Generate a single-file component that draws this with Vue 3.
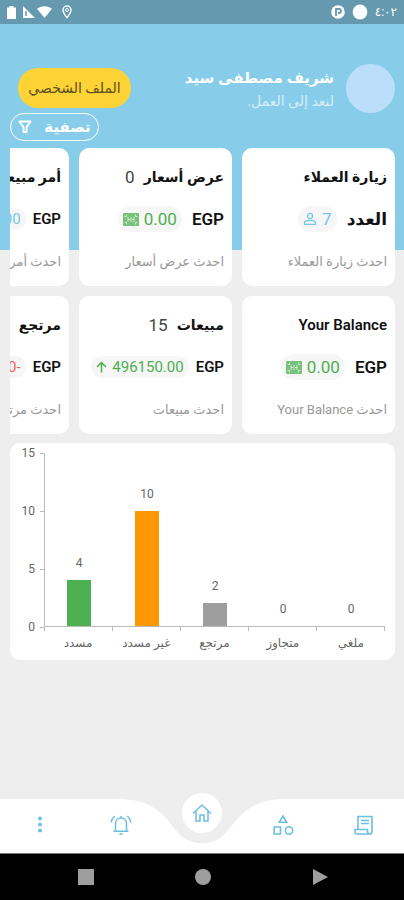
<script setup>
import { ref, computed } from 'vue'

const columns = [
  [
    { title: 'زيارة العملاء', label: 'العدد', value: '7', icon: 'person', tone: 'blue', latest: 'احدث زيارة العملاء' },
    { title: 'Your Balance', lang: 'en', label: 'EGP', value: '0.00', icon: 'money', tone: 'green', latest: 'احدث Your Balance' }
  ],
  [
    { title: 'عرض أسعار', count: '0', label: 'EGP', value: '0.00', icon: 'money', tone: 'green', latest: 'احدث عرض أسعار' },
    { title: 'مبيعات', count: '15', label: 'EGP', value: '496150.00', icon: 'up', tone: 'green', compact: true, latest: 'احدث مبيعات' }
  ],
  [
    { title: 'أمر مبيعات', count: '0', label: 'EGP', value: '0.00', icon: 'money', tone: 'blue', compact: true, latest: 'احدث أمر مبيعات' },
    { title: 'مرتجع', count: '2', label: 'EGP', value: '-100.00', icon: 'money', tone: 'red', compact: true, latest: 'احدث مرتجع' }
  ]
]

const bars = [
  { name: 'مسدد', value: 4, tone: 'green' },
  { name: 'غير مسدد', value: 10, tone: 'orange' },
  { name: 'مرتجع', value: 2, tone: 'gray' },
  { name: 'متجاوز', value: 0, tone: 'gray' },
  { name: 'ملغي', value: 0, tone: 'gray' }
]

const max = 15
const ticks = [15, 10, 5, 0]
const activeTab = ref('home')

const plotted = computed(() =>
  bars.map((bar) => ({ ...bar, height: (bar.value / max) * 100 + '%' }))
)
</script>

<template>
  <div class="app" dir="rtl" lang="ar">
    <div class="status-bar">
      <div class="status-group">
        <span class="clock">٤:٠٢</span>
        <svg width="16" height="16" viewBox="0 0 16 16"><circle cx="8" cy="8" r="7.4" fill="#fff" /></svg>
        <svg width="14" height="14" viewBox="0 0 14 14">
          <circle cx="7" cy="7" r="6.8" fill="#fff" />
          <path d="M5 11V4h3a2 2 0 0 1 0 4H7" fill="none" stroke="#6499b0" stroke-width="1.8" />
        </svg>
      </div>
      <div class="status-group icons">
        <svg class="pin" width="10" height="14" viewBox="0 0 10 14" fill="none" stroke="#fff">
          <path d="M5 12.6C2.5 9.5 1 7 1 5a4 4 0 0 1 8 0c0 2-1.500 4.500-4 7.600z" stroke-width="1.400" />
          <circle cx="5" cy="5" r="1.500" />
        </svg>
        <svg width="15" height="12" viewBox="0 0 15 12"><path d="M0 2.800C4.500-.6 10.500-.6 15 2.800L7.500 12z" fill="#fff" /></svg>
        <svg width="12" height="12" viewBox="0 0 12 12"><path d="M0 0l12 12H0z" fill="#fff" /><path d="M3 5v5" stroke="#6499b0" stroke-width="1.500" /></svg>
        <svg class="battery" width="9" height="13" viewBox="0 0 9 13"><path d="M2.500 0h4v1.500H9V13H0V1.500h2.500z" fill="#fff" /></svg>
      </div>
    </div>

    <header class="header">
      <div class="avatar"></div>
      <div class="user">
        <h1 class="user-name">شريف مصطفى سيد</h1>
        <p class="user-hint">لنعد إلى العمل.</p>
      </div>
      <button type="button" class="profile-btn">الملف الشخصي</button>
    </header>

    <div class="filter-row">
      <button type="button" class="filter-btn">
        تصفية
        <svg width="14" height="14" viewBox="0 0 14 14" fill="none" stroke="#fff" stroke-width="1.900">
          <path d="M1.500 1.500h11L8.500 7.200V12h-3V7.200z" stroke-linejoin="round" />
        </svg>
      </button>
    </div>

    <main class="content">
      <div class="cards">
        <div v-for="(column, i) in columns" :key="i" class="card-column">
          <section v-for="card in column" :key="card.title" class="card">
            <div class="card-row card-head">
              <h2 class="card-title" :lang="card.lang">{{ card.title }}</h2>
              <span v-if="card.count" class="card-count">{{ card.count }}</span>
            </div>
            <div class="card-row" :class="{ compact: card.compact }">
              <span class="card-label">{{ card.label }}</span>
              <span class="pill" :class="card.tone">
                {{ card.value }}
                <svg v-if="card.icon === 'person'" width="14" height="14" viewBox="0 0 14 14" fill="none" stroke="currentColor" stroke-width="1.300">
                  <circle cx="7" cy="4" r="2.600" />
                  <path d="M1.500 12.300v-1.500C1.500 9.200 4.500 8.400 7 8.400s5.500.8 5.500 2.400v1.500z" />
                </svg>
                <svg v-else-if="card.icon === 'up'" width="11" height="12" viewBox="0 0 11 12" fill="none" stroke="currentColor" stroke-width="1.500">
                  <path d="M5.500 11.500V1.500M1 6l4.500-4.500L10 6" />
                </svg>
                <svg v-else width="16" height="13" viewBox="0 0 16 13">
                  <rect width="16" height="13" rx="1" fill="currentColor" fill-opacity=".75" />
                  <path d="M1.500 3.500h2v-2M14.500 3.500h-2v-2M1.500 9.500h2v2M14.500 9.500h-2v2M5 4v5M11 4v5M5 6.500h2M9 6.500h2M8 4v5" fill="none" stroke="#d9efd9" stroke-width=".9" />
                </svg>
              </span>
            </div>
            <a href="#" class="card-row card-latest">{{ card.latest }}</a>
          </section>
        </div>
      </div>

      <section class="chart" dir="ltr">
        <div class="y-axis">
          <span v-for="tick in ticks" :key="tick" class="y-tick">{{ tick }}</span>
        </div>
        <div class="plot">
          <div class="bars">
            <div v-for="bar in plotted" :key="bar.name" class="slot">
              <span class="bar-value">{{ bar.value }}</span>
              <div class="bar" :class="bar.tone" :style="{ height: bar.height }"></div>
            </div>
          </div>
          <div class="x-axis">
            <span v-for="bar in plotted" :key="bar.name" class="x-tick"></span>
          </div>
          <div class="x-labels">
            <span v-for="bar in plotted" :key="bar.name" class="x-label">{{ bar.name }}</span>
          </div>
        </div>
      </section>
    </main>

    <nav class="tab-bar" dir="ltr">
      <div class="tab-shape">
        <span class="tab-side"></span>
        <svg width="168" height="54" viewBox="0 0 168 54">
          <path d="M0 0C22 0 38 6 52 24C62 37 68 44 84 44S106 37 116 24C130 6 146 0 168 0V54H0z" fill="#fff" />
        </svg>
        <span class="tab-side"></span>
      </div>
      <button type="button" class="tab" aria-label="المزيد" @click="activeTab = 'more'">
        <svg width="22" height="22" viewBox="0 0 22 22" fill="currentColor">
          <circle cx="11" cy="3.500" r="2" /><circle cx="11" cy="9.500" r="2" /><circle cx="11" cy="15.500" r="2" />
        </svg>
      </button>
      <button type="button" class="tab" aria-label="الإشعارات" @click="activeTab = 'alerts'">
        <svg width="22" height="22" viewBox="0 0 22 22" fill="none" stroke="currentColor" stroke-width="1.500">
          <path d="M3.500 16.200h15M5.500 16V8.500C5.500 5 8 3 11 3s5.500 2 5.500 5.500V16M11 3V1" />
          <path d="M1.200 7.500c.3-2.700 1.500-4.900 3.500-6.500M20.800 7.500c-.3-2.700-1.500-4.900-3.500-6.500" />
          <path d="M9 18.200h4a2 1.800 0 0 1-4 0z" fill="currentColor" stroke="none" />
        </svg>
      </button>
      <button type="button" class="tab home" aria-label="الرئيسية" @click="activeTab = 'home'">
        <span class="home-circle">
          <svg width="20" height="20" viewBox="0 0 20 20" fill="none" stroke="currentColor" stroke-width="1.500">
            <path d="M1 10.500L10 2l9 8.500M4 8v10h4v-6h4v6h4V8" />
          </svg>
        </span>
      </button>
      <button type="button" class="tab" aria-label="الأصناف" @click="activeTab = 'items'">
        <svg width="22" height="22" viewBox="0 0 22 22" fill="none" stroke="currentColor" stroke-width="1.600">
          <path d="M11 1l3.700 6.300H7.300zM2.200 12h6.300v7H2.200z" />
          <circle cx="17" cy="15.500" r="3.700" />
        </svg>
      </button>
      <button type="button" class="tab" aria-label="الفواتير" @click="activeTab = 'invoices'">
        <svg width="22" height="22" viewBox="0 0 22 22" fill="none" stroke="currentColor" stroke-width="1.600">
          <path d="M5 14.500V1.500h14v15c0 1.400-.8 2.500-2.200 2.500H4c-1.300 0-2-.8-2-2v-2.500h12.500v2c0 1.500.8 2.500 2.200 2.500" />
          <path d="M8 5.500h8M8 8.500h8" />
        </svg>
      </button>
    </nav>

    <div class="system-bar" dir="ltr">
      <svg width="16" height="16" viewBox="0 0 16 16"><rect width="16" height="16" fill="#9e9e9e" /></svg>
      <svg width="16" height="16" viewBox="0 0 16 16"><circle cx="8" cy="8" r="8" fill="#9e9e9e" /></svg>
      <svg width="16" height="16" viewBox="0 0 16 16"><path d="M1 0l15 8-15 8z" fill="#9e9e9e" /></svg>
    </div>
  </div>
</template>

<style>
body {
  background: #eee;
}
</style>

<style scoped>
.app {
  min-height: 100vh;
  display: flex;
  flex-direction: column;
  background: linear-gradient(#87cdea 250px, #eee 250px);
  font-family: Roboto, "DejaVu Sans", sans-serif;
  color: #111;
}

h1,
h2,
p {
  margin: 0;
}

button {
  font-family: inherit;
  cursor: pointer;
}

svg {
  display: block;
  flex: none;
}

.status-bar {
  height: 24px;
  display: flex;
  align-items: center;
  justify-content: space-between;
  padding: 0 7px;
  background: #6499b0;
  color: #fff;
}

.status-group {
  display: flex;
  align-items: center;
  gap: 7px;
}

.status-group.icons {
  gap: 2px;
}

.pin {
  margin-left: 8px;
}

.battery {
  margin-right: 5px;
}

.clock {
  font-size: 12px;
}

.header {
  display: flex;
  align-items: flex-start;
  padding: 40px 9px 0 18px;
}

.avatar {
  flex: none;
  width: 49px;
  height: 49px;
  border-radius: 50%;
  background: #bbdefb;
}

.user {
  flex: 1;
  padding: 2px 12px 0 0;
  color: #fff;
  white-space: nowrap;
}

.user-name {
  font-size: 15px;
  line-height: 24px;
  font-weight: 700;
}

.user-hint {
  font-size: 14px;
  line-height: 22px;
  opacity: 0.65;
}

.profile-btn {
  flex: none;
  width: 113px;
  height: 40px;
  margin-top: 4px;
  padding: 0;
  border: none;
  border-radius: 20px;
  background: #fdd335;
  color: #5c5020;
  font-size: 14px;
}

.filter-row {
  display: flex;
  justify-content: flex-end;
  padding: 0 10px;
}

.filter-btn {
  display: flex;
  align-items: center;
  justify-content: center;
  gap: 12px;
  width: 89px;
  height: 28px;
  padding: 0;
  border: 1px solid #fff;
  border-radius: 14px;
  background: none;
  color: #fff;
  font-size: 15px;
  font-weight: 700;
}

.content {
  flex: 1;
  display: flex;
  flex-direction: column;
  gap: 9px;
  padding: 7px 9px 12px 10px;
}

.cards {
  display: flex;
  gap: 10px;
  overflow-x: auto;
  scrollbar-width: none;
}

.card-column {
  flex: none;
  width: 153px;
  display: flex;
  flex-direction: column;
  gap: 10px;
}

.card {
  display: flex;
  flex-direction: column;
  gap: 12px;
  padding: 14px 8px 10px;
  border-radius: 10px;
  background: #fff;
}

.card-row {
  display: flex;
  align-items: center;
  gap: 10px;
  height: 30px;
  white-space: nowrap;
}

.card-head {
  gap: 9px;
}

.card-title {
  font-size: 14px;
  font-weight: 600;
}

.card-title:lang(en) {
  font-size: 15px;
}

.card-count {
  font-size: 17px;
  color: #444;
}

.card-label {
  font-size: 17px;
  font-weight: 600;
}

.pill {
  display: flex;
  align-items: center;
  gap: 5px;
  height: 26px;
  padding: 0 5px;
  border-radius: 13px;
  background: #f6f6f6;
  font-size: 17px;
}

.compact {
  gap: 7px;
}

.compact .card-label {
  font-size: 15px;
}

.compact .pill {
  height: 22px;
  font-size: 15px;
}

.pill.green {
  color: #4caf50;
}

.pill.blue {
  color: #74c7e8;
}

.pill.red {
  color: #f0605a;
}

.card-latest {
  font-size: 13px;
  color: #999;
  text-decoration: none;
}

.chart {
  display: flex;
  padding: 10px 10px 8px 0;
  border-radius: 10px;
  background: #fff;
  color: #666;
  font-size: 12px;
}

.y-axis {
  display: flex;
  flex-direction: column;
  justify-content: space-between;
  align-items: flex-end;
  width: 34px;
  height: 188px;
  margin-top: -7px;
}

.y-tick {
  display: flex;
  align-items: center;
  gap: 5px;
  line-height: 14px;
}

.y-tick::after {
  content: '';
  width: 4px;
  height: 1px;
  background: #bbb;
}

.plot {
  flex: 1;
}

.bars {
  display: flex;
  height: 173px;
  border-left: 1px solid #bbb;
  border-bottom: 1px solid #bbb;
}

.slot {
  flex: 1;
  display: flex;
  flex-direction: column;
  align-items: center;
  justify-content: flex-end;
}

.bar-value {
  line-height: 14px;
  padding-bottom: 10px;
}

.bar {
  width: 24px;
}

.bar.green {
  background: #4caf50;
}

.bar.orange {
  background: #ff9800;
}

.bar.gray {
  background: #9e9e9e;
}

.x-axis,
.x-labels {
  display: flex;
}

.x-tick {
  flex: 1;
  height: 4px;
  border-left: 1px solid #bbb;
}

.x-tick:last-child {
  border-right: 1px solid #bbb;
}

.x-label {
  flex: 1;
  padding-top: 3px;
  line-height: 18px;
  text-align: center;
  white-space: nowrap;
}

.tab-bar {
  position: relative;
  display: flex;
  height: 54px;
}

.tab-shape {
  position: absolute;
  inset: 0;
  display: flex;
}

.tab-side {
  flex: 1;
  background: #fff;
}

.tab {
  position: relative;
  flex: 1;
  display: flex;
  justify-content: center;
  align-items: center;
  padding: 0;
  border: none;
  background: none;
  color: #6bbfe3;
}

.home {
  align-items: flex-start;
}

.home-circle {
  display: flex;
  align-items: center;
  justify-content: center;
  width: 40px;
  height: 40px;
  margin-top: -6px;
  border-radius: 50%;
  background: #fff;
}

.system-bar {
  display: flex;
  align-items: center;
  justify-content: space-between;
  height: 46px;
  padding: 0 76px 0 78px;
  border-top: 1px solid #777;
  background: #000;
}
</style>
